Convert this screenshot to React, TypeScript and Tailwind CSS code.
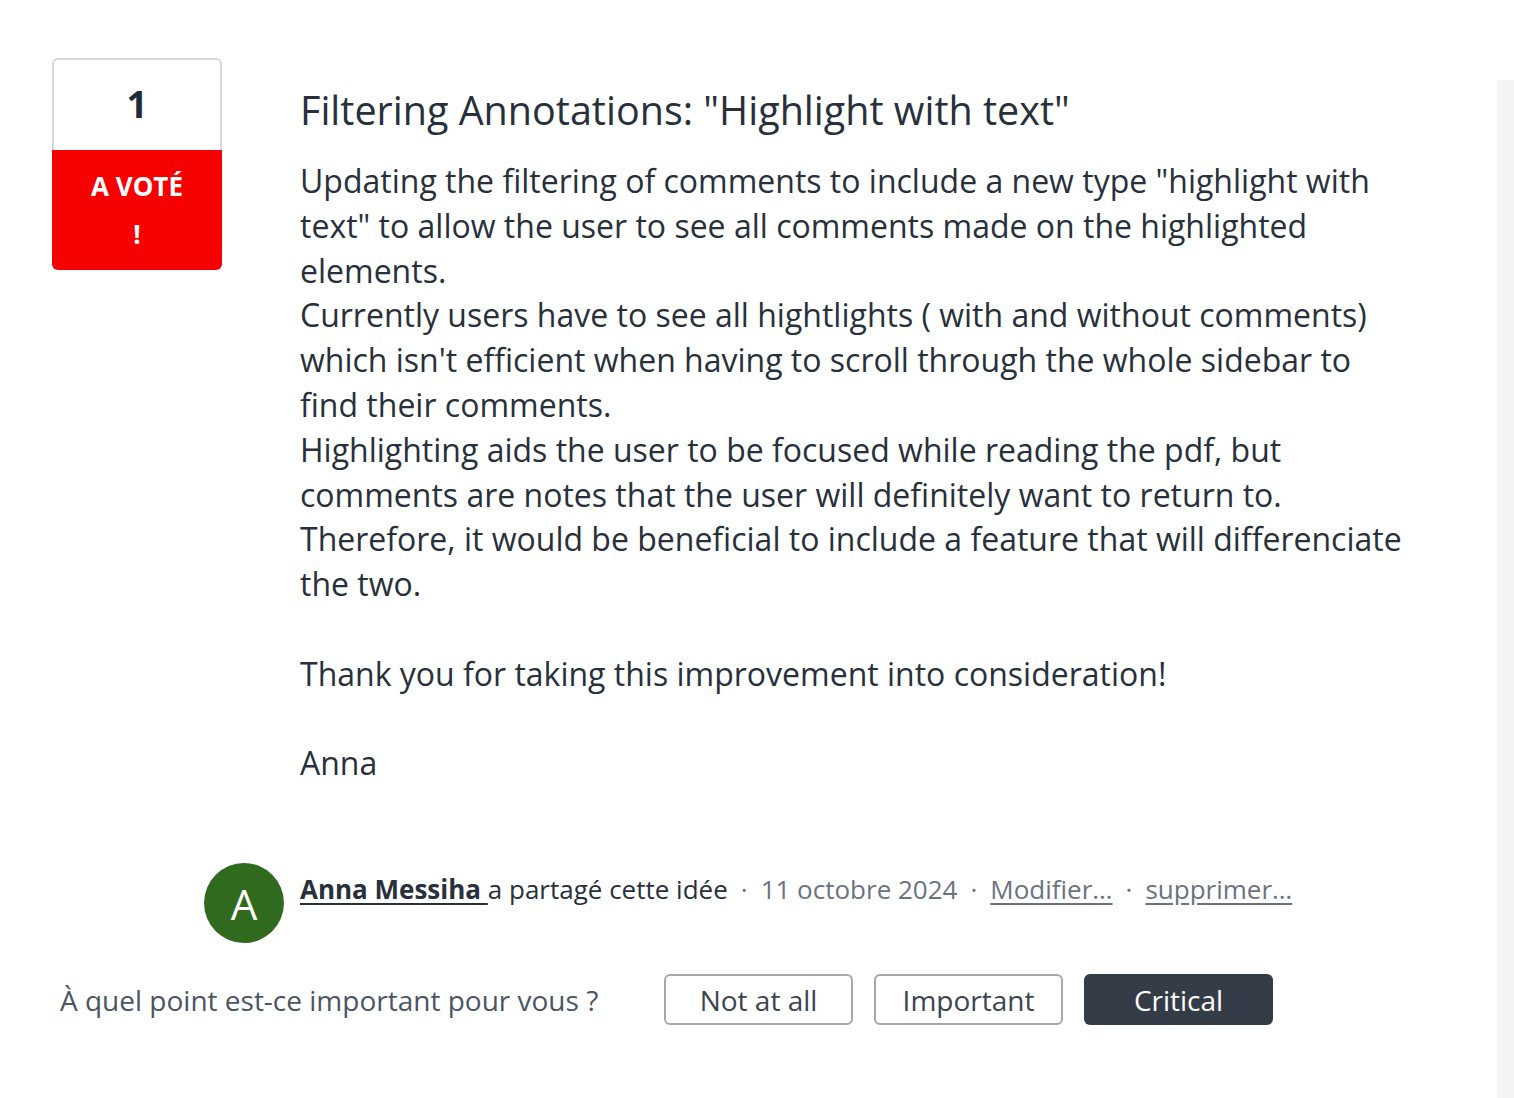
import React from 'react';

const FONT = { fontFamily: '"Open Sans", "Noto Sans", sans-serif' };

function VoteBox() {
  return (
    <div className="w-[170px] shrink-0 flex flex-col">
      <div className="h-[92px] border-2 border-b-0 border-[#d3d9e6] rounded-t-md flex items-center justify-center pb-[3px]">
        <span className="text-[37px] leading-[44px] font-bold text-[#1f2a37]">1</span>
      </div>
      <div className="h-[120px] bg-[#f70000] rounded-b-md flex flex-col items-center justify-center text-white font-bold text-[26px] leading-[48px]">
        <span>A VOTÉ</span>
        <span>!</span>
      </div>
    </div>
  );
}

function Sep() {
  return <span className="mx-[13px] text-[#6b7280]">·</span>;
}

export default function App() {
  return (
    <div className="min-h-screen flex bg-white" style={FONT}>
      <div className="flex-1 pt-[58px] pl-[52px]">
        <div className="flex">
          <VoteBox />
          <div className="ml-[78px] w-[1106px] text-[#27303b]">
            <h1 className="text-[39.5px] leading-[46px] mt-[29px] font-normal">
              Filtering Annotations: "Highlight with text"
            </h1>
            <div className="mt-[26px] text-[32px] leading-[44.8px]">
              <p>
                Updating the filtering of comments to include a new type "highlight with text" to allow the user to see all comments made on the highlighted elements.
              </p>
              <p>
                Currently users have to see all hightlights ( with and without comments) which isn't efficient when having to scroll through the whole sidebar to find their comments.
              </p>
              <p>
                Highlighting aids the user to be focused while reading the pdf, but comments are notes that the user will definitely want to return to.
              </p>
              <p>
                Therefore, it would be beneficial to include a feature that will differenciate the two.
              </p>
              <p>&nbsp;</p>
              <p>Thank you for taking this improvement into consideration!</p>
              <p>&nbsp;</p>
              <p>Anna</p>
            </div>
          </div>
        </div>

        <div className="flex items-start mt-[77px] pl-[152px]">
          <div className="w-[80px] h-[80px] rounded-full bg-[#306a1f] flex items-center justify-center text-white text-[42px] shrink-0">
            A
          </div>
          <div className="ml-[16px] mt-[8px] text-[26px] leading-[36px] text-[#27303b]">
            <a href="#" className="font-bold underline underline-offset-4 text-[#27303b]">
              Anna Messiha{' '}
            </a>
            <span>a partagé cette idée</span>
            <Sep />
            <span className="text-[#6b7280]">11 octobre 2024</span>
            <Sep />
            <a href="#" className="text-[#6b7280] underline underline-offset-4">
              Modifier…
            </a>
            <Sep />
            <a href="#" className="text-[#6b7280] underline underline-offset-4">
              supprimer…
            </a>
          </div>
        </div>

        <div className="flex items-center mt-[31px] ml-[8px]">
          <span className="text-[28px] text-[#4b5563] w-[604px] shrink-0">
            À quel point est-ce important pour vous ?
          </span>
          <div className="flex gap-[21px]">
            <button className="w-[189px] h-[51px] rounded-md border-2 border-[#a8a8a8] bg-white text-[28px] text-[#3c4450]">
              Not at all
            </button>
            <button className="w-[189px] h-[51px] rounded-md border-2 border-[#a8a8a8] bg-white text-[28px] text-[#3c4450]">
              Important
            </button>
            <button className="w-[189px] h-[51px] rounded-md bg-[#343d47] text-[28px] text-white">
              Critical
            </button>
          </div>
        </div>
      </div>
      <div className="w-[17px] shrink-0 mt-[80px] bg-[#f3f4f6]" />
    </div>
  );
}
